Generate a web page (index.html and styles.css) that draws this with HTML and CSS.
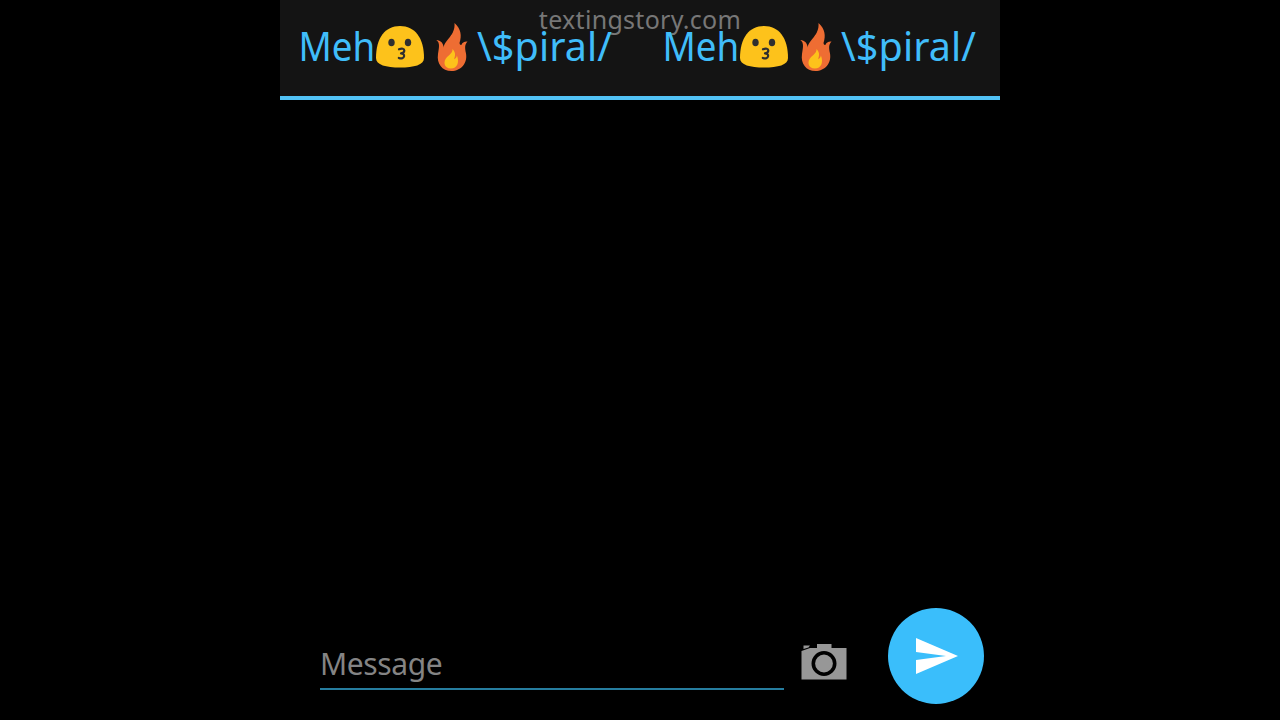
FILE: index.html
```html
<!DOCTYPE html>
<html lang="en">
<head>
    <meta charset="UTF-8">
    <meta name="viewport" content="width=device-width, initial-scale=1.0">
    <title>Texting Story</title>
    <link rel="stylesheet" href="styles.css">
</head>
<body>
    <svg width="0" height="0" class="symbols">
        <symbol id="kiss" viewBox="0 0 50 44">
            <path d="M1 33C1 13 10 1 25 1s24 12 24 32c0 7-10 9.500-24 9.500S1 40 1 33z" fill="#fdc21b"/>
            <ellipse cx="16.500" cy="17.500" rx="3.200" ry="3.800" fill="#2f2f2f"/>
            <ellipse cx="33" cy="17.500" rx="3.200" ry="3.800" fill="#2f2f2f"/>
            <path d="M24 24.300c3-1.300 5.300-.6 5.300 1.200 0 1.700-1.500 2.600-3.300 2.900 2.200.2 3.300 1.200 3.100 2.700-.3 2-2.500 2.900-5.300 1.800" fill="none" stroke="#2f2f2f" stroke-width="2.200" stroke-linecap="round" stroke-linejoin="round"/>
        </symbol>
        <symbol id="fire" viewBox="0 0 32 50">
            <path d="M18.500 1c6.500 6 7.500 12.500 5 20 .2 1.600 1.500 2.500 2.200 1.500.6-1.700 2.300-3.200 5.800-3-3 3-2.600 6.700-1.600 11.500C32 41 25 49 15.500 49 6 49 .5 41.500 2 32c.8-5.500 2.500-11.300-1.700-14 4.500.2 7.300 3.400 7.300 7.500C9 17 19.500 14 18.500 1z" fill="#ee6d33"/>
            <path d="M16.500 27c4 4 2.300 7.600 1.700 10.200 1.600-.7 2.400-1.900 2.700-3.700 2.700 6.500.6 13-6 13-7.200 0-8.100-7.500-3.800-11.500 3.400-3.100 5.600-4.600 5.400-8z" fill="#fdc21b"/>
        </symbol>
    </svg>
    <div class="phone">
        <header class="header">
            <div class="name">
                <span class="meh">Meh</span>
                <svg class="kiss"><use href="#kiss"/></svg>
                <svg class="fire"><use href="#fire"/></svg>
                <span class="spiral">\$piral/</span>
            </div>
            <div class="name">
                <span class="meh">Meh</span>
                <svg class="kiss"><use href="#kiss"/></svg>
                <svg class="fire"><use href="#fire"/></svg>
                <span class="spiral">\$piral/</span>
            </div>
            <div class="watermark">textingstory.com</div>
        </header>
        <main class="messages"></main>
        <footer class="composer">
            <div class="message-field">Message</div>
            <svg class="camera" viewBox="0 0 46 38">
                <path d="M.5 8 9 5h7V1h14.500v4h15v31.500H.5z" fill="#979797"/>
                <path d="M2.500 2.500h6.500L7.500 4.500l-5 1.500z" fill="#979797"/>
                <circle cx="23" cy="20.500" r="10.700" fill="none" stroke="#000" stroke-width="3.600"/>
            </svg>
            <div class="send">
                <svg viewBox="0 0 42 36">
                    <path d="M0 0 42 18 0 36V22l30-4L0 14z" fill="#fff"/>
                </svg>
            </div>
        </footer>
    </div>
</body>
</html>
```
FILE: styles.css
```css
body {
    margin: 0;
    background: #000;
    font-family: "Noto Sans", sans-serif;
}
.symbols {
    display: block;
}
.phone {
    display: flex;
    flex-direction: column;
    width: 720px;
    height: 720px;
    margin: 0 auto;
    overflow: hidden;
}
.header {
    position: relative;
    display: flex;
    box-sizing: border-box;
    height: 100px;
    padding-left: 17px;
    background: #141414;
    border-bottom: 4px solid #52c3f6;
}
.name {
    display: flex;
    align-items: flex-start;
    width: 364px;
    flex-shrink: 0;
    color: #40bdfa;
    font-size: 39.5px;
    line-height: 54px;
    white-space: nowrap;
    z-index: 1;
}
.meh {
    width: 78px;
    margin-top: 19px;
    transform: translateX(1.5px) scaleX(0.93);
    transform-origin: left;
}
.kiss {
    width: 50px;
    height: 44px;
    margin-top: 25px;
}
.fire {
    width: 32px;
    height: 50px;
    margin: 22px 9px 0 11px;
}
.spiral {
    margin-top: 19px;
    letter-spacing: 0.1px;
}
.watermark {
    position: absolute;
    top: 3px;
    left: 0;
    width: 100%;
    text-align: center;
    color: #777;
    font-size: 25px;
    line-height: 33px;
    letter-spacing: 0.3px;
}
.messages {
    flex: 1;
}
.composer {
    display: flex;
    align-items: flex-start;
    height: 112px;
    padding-left: 40px;
}
.message-field {
    box-sizing: border-box;
    width: 464px;
    height: 82px;
    padding-top: 35px;
    border-bottom: 2px solid #267d9f;
    color: #848484;
    font-size: 30px;
    line-height: 41px;
    letter-spacing: -0.4px;
}
.camera {
    width: 46px;
    height: 38px;
    margin: 35px 0 0 17px;
}
.send {
    display: flex;
    box-sizing: border-box;
    width: 96px;
    height: 96px;
    margin-left: 41px;
    padding: 30px 0 0 28px;
    border-radius: 50%;
    background: #3abefb;
}
.send svg {
    width: 42px;
    height: 36px;
}
```
